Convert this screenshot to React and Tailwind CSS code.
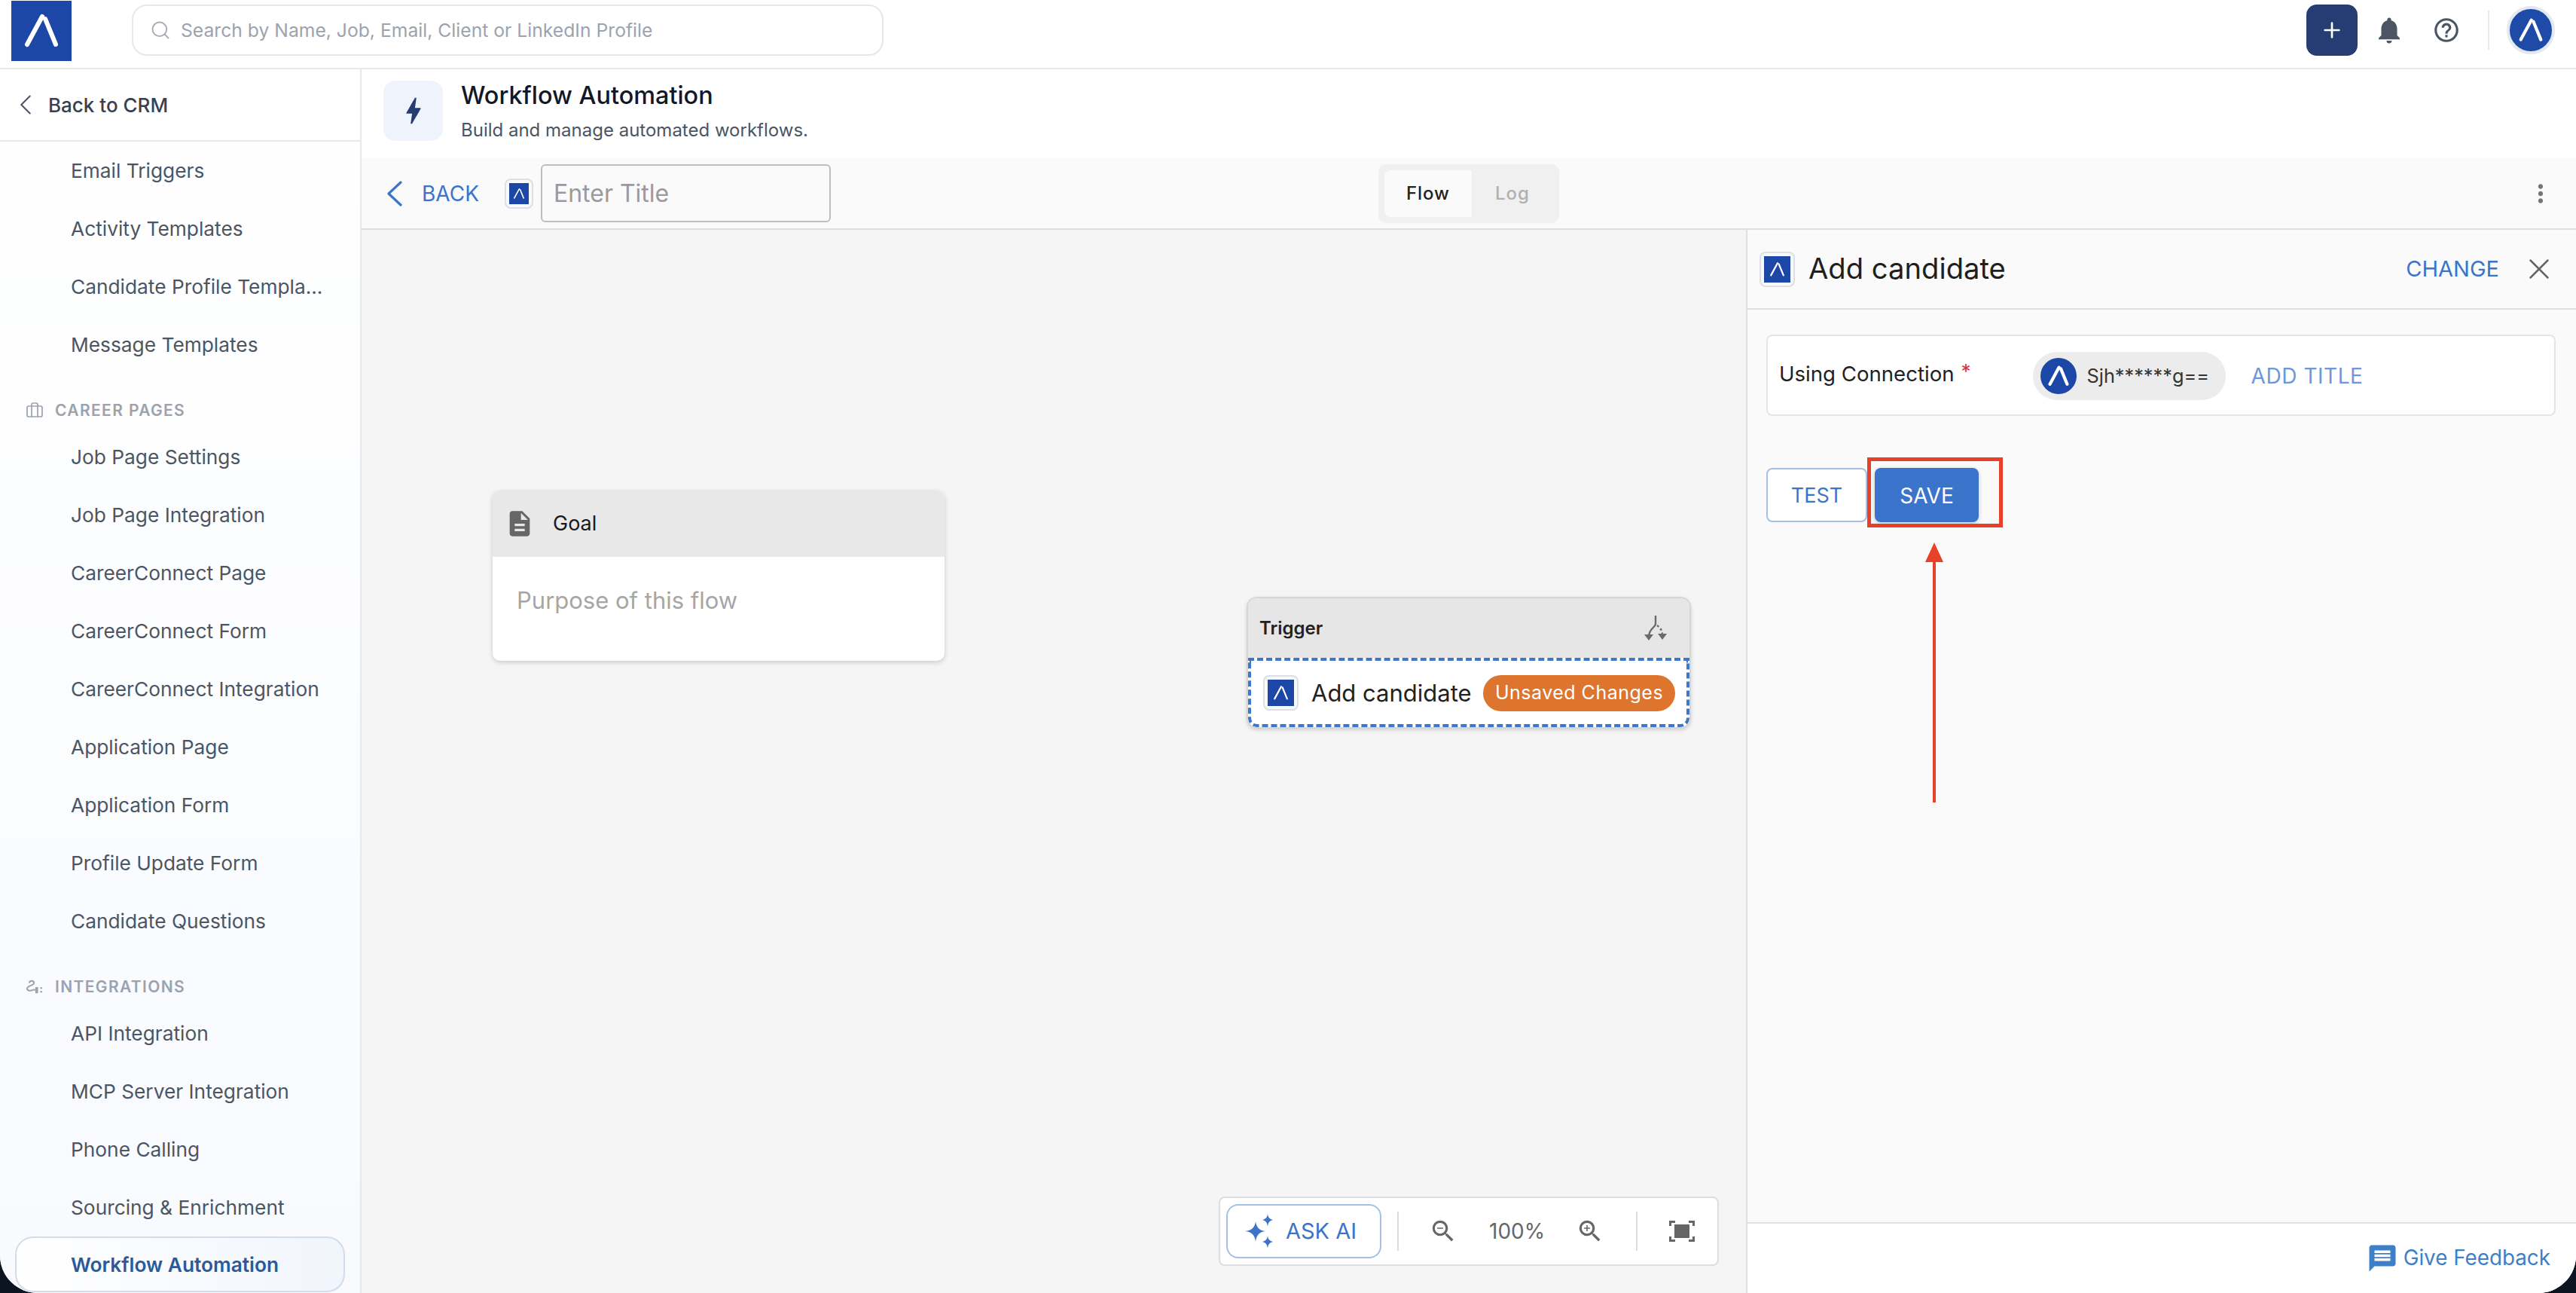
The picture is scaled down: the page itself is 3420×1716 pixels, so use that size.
import React from "react";
import { ChevronLeft, Search, Briefcase, Plus, X } from "lucide-react";
import { MdNotifications, MdHelpOutline, MdMoreVert, MdDescription, MdZoomIn, MdZoomOut, MdMessage, MdBolt } from "react-icons/md";

const font = { fontFamily: "Inter, 'Noto Sans', sans-serif" };

function Mark({ className = "", sw = 6 }) {
  return (
    <svg viewBox="0 0 80 80" className={className} fill="none" stroke="#fff" strokeWidth={sw} strokeLinecap="round">
      <path d="M21 58 L41 21" />
      <path d="M45 24 L59 58" />
    </svg>
  );
}

function Tile({ outer = "w-[47px] h-[47px]", sw = 5 }) {
  return (
    <div className={`${outer} shrink-0 rounded-[8px] border-2 border-[#dcdfe4] bg-[#f7f9fc] p-[4px]`}>
      <div className="w-full h-full bg-[#1c47a6]">
        <Mark className="w-full h-full" sw={sw} />
      </div>
    </div>
  );
}

function Item({ children }) {
  return (
    <div className="h-[77px] shrink-0 pl-[94px] flex items-center text-[26.3px] text-[#4b5563] whitespace-nowrap">
      {children}
    </div>
  );
}

function Section({ icon, children }) {
  return (
    <div className="h-[72px] shrink-0 pt-[37px] pl-[34px] flex items-start gap-[15px] text-[21px] leading-[24px] font-semibold tracking-[0.065em] text-[#9ca3af]">
      <span className="w-[24px] h-[24px] flex items-center justify-center">{icon}</span>
      <span>{children}</span>
    </div>
  );
}

function Sparkle() {
  return (
    <svg viewBox="0 0 38 46" className="w-[38px] h-[46px]" fill="#3b74c8">
      <path d="M14 10 C15 18 19 22 27 23 C19 24 15 28 14 37 C13 28 9 24 0 23 C9 22 13 18 14 10 Z" />
      <path d="M30 0 C30.5 5 33 7 37 8 C33 9 30.5 11 30 17 C29.5 11 27 9 23 8 C27 7 29.5 5 30 0 Z" />
      <path d="M30 29 C30.5 34 33 36 37 37 C33 38 30.5 40 30 46 C29.5 40 27 38 23 37 C27 36 29.5 34 30 29 Z" />
    </svg>
  );
}

function FitIcon() {
  return (
    <svg viewBox="0 0 34 28" className="w-[34px] h-[28px]" fill="none" stroke="#666" strokeWidth="3">
      <path d="M1.5 7 V1.5 H8 M26 1.5 H32.5 V7 M32.5 21 V26.5 H26 M8 26.5 H1.5 V21" />
      <rect x="7" y="5" width="20" height="18" fill="#666" stroke="none" />
    </svg>
  );
}

function BranchIcon() {
  return (
    <svg viewBox="0 0 30 34" className="w-[30px] h-[34px]" fill="none" stroke="#6b6b6b" strokeWidth="2.4">
      <path d="M15 0 V11 C15 15 7 17 6 27" />
      <path d="M17 13 C20 15 23 18 24 24" strokeDasharray="3 3" />
      <path d="M0 25 H12 L6 33 Z" fill="#6b6b6b" stroke="none" />
      <path d="M18 24 H30 L24 32 Z" fill="#6b6b6b" stroke="none" />
    </svg>
  );
}

function PlugIcon() {
  return (
    <svg viewBox="0 0 24 22" className="w-[22px] h-[20px]" fill="none" stroke="#9ca3af" strokeWidth="2.2">
      <path d="M4 5 C5 1 11 1 11 5 C11 9 1 9 1 13 C1 17 6 17 10 15" />
      <path d="M10 15 H13" />
      <path d="M13 11 H17 V20 H13 Z" fill="#9ca3af" stroke="none" />
      <path d="M20 12.5 H23 M20 18 H23" />
    </svg>
  );
}

export default function App() {
  return (
    <div className="w-[3420px] h-[1716px] bg-[#0b1420] overflow-hidden" style={font}>
      <div className="w-full h-full bg-white rounded-b-[50px] overflow-hidden flex flex-col">
        {/* Top bar */}
        <header className="h-[92px] shrink-0 border-b-2 border-[#e8e8e8] flex items-center bg-white">
          <div className="ml-[15px] mt-[-9px] w-[80px] h-[80px] bg-[#1c47a6] shrink-0">
            <Mark className="w-full h-full" sw={6} />
          </div>
          <div className="ml-[80px] mt-[-10px] w-[998px] h-[68px] rounded-[20px] border-2 border-[#e6e7ea] flex items-center pl-[22px] gap-[13px]">
            <Search className="w-[28px] h-[28px] text-[#a6abb3]" strokeWidth={1.6} />
            <span className="text-[24.7px] pt-[1px] text-[#9ca3af]">Search by Name, Job, Email, Client or LinkedIn Profile</span>
          </div>
          <div className="ml-auto mr-[28px] mt-[-10px] flex items-center">
            <div className="w-[68px] h-[68px] rounded-[14px] bg-[#263d73] flex items-center justify-center">
              <Plus className="w-[32px] h-[32px] text-white" strokeWidth={2} />
            </div>
            <MdNotifications className="ml-[21px] w-[42px] h-[42px] text-[#4b5563]" />
            <MdHelpOutline className="ml-[36px] w-[38px] h-[38px] text-[#4b5563]" />
            <div className="ml-[36px] w-[2px] h-[52px] bg-[#e5e7eb]" />
            <div className="ml-[23px] w-[64px] h-[64px] rounded-full border-[4px] border-[#e4e8f0] bg-[#1e4aa8] overflow-hidden">
              <Mark className="w-full h-full" sw={6} />
            </div>
          </div>
        </header>

        <div className="flex-1 flex min-h-0">
          {/* Sidebar */}
          <aside className="w-[480px] shrink-0 border-r-2 border-[#e7e8ec] bg-gradient-to-b from-white to-[#f8fafe] overflow-hidden flex flex-col">
            <div className="h-[96px] shrink-0 border-b-2 border-[#e8e8e8] flex items-center pl-[11px] gap-[7px] bg-white">
              <ChevronLeft className="w-[46px] h-[46px] text-[#4b5563]" strokeWidth={1.1} />
              <span className="text-[26px] font-medium text-[#374151]">Back to CRM</span>
            </div>
            <Item>Email Triggers</Item>
            <Item>Activity Templates</Item>
            <Item>Candidate Profile Templa...</Item>
            <Item>Message Templates</Item>
            <Section icon={<Briefcase className="w-[24px] h-[24px]" strokeWidth={1.7} />}>CAREER PAGES</Section>
            <Item>Job Page Settings</Item>
            <Item>Job Page Integration</Item>
            <Item>CareerConnect Page</Item>
            <Item>CareerConnect Form</Item>
            <Item>CareerConnect Integration</Item>
            <Item>Application Page</Item>
            <Item>Application Form</Item>
            <Item>Profile Update Form</Item>
            <Item>Candidate Questions</Item>
            <Section icon={<PlugIcon />}>INTEGRATIONS</Section>
            <Item>API Integration</Item>
            <Item>MCP Server Integration</Item>
            <Item>Phone Calling</Item>
            <Item>Sourcing &amp; Enrichment</Item>
            <div className="ml-[20px] w-[438px] h-[74px] pt-[2px] shrink-0 rounded-[24px] border-2 border-[#d3dcea] bg-gradient-to-r from-white to-[#f1f5fc] flex items-center pl-[72px] text-[26.3px] font-semibold text-[#2b5a9b]">
              Workflow Automation
            </div>
          </aside>

          {/* Main */}
          <main className="flex-1 min-w-0 flex flex-col">
            <div className="h-[118px] shrink-0 bg-white flex items-center pl-[29px] pb-[8px] gap-[24px]">
              <div className="w-[79px] h-[80px] rounded-[16px] bg-[#eff4fc] flex items-center justify-center">
                <MdBolt className="w-[46px] h-[46px] text-[#263d73]" />
              </div>
              <div className="flex flex-col gap-[12px] pt-[2px]">
                <div className="text-[32.4px] leading-[38px] font-medium text-[#111827]">Workflow Automation</div>
                <div className="text-[24px] leading-[30px] text-[#4b5563]">Build and manage automated workflows.</div>
              </div>
            </div>

            <div className="h-[95px] shrink-0 bg-[#fafafa] border-b-2 border-[#dedede] flex items-center pl-[33px] pr-[28px] relative">
              <svg viewBox="0 0 22 34" className="w-[22px] h-[34px]" fill="none" stroke="#3b74c8" strokeWidth="3.2" strokeLinecap="round" strokeLinejoin="round">
                <path d="M19 2 L3 17 L19 32" />
              </svg>
              <span className="ml-[25px] text-[28px] text-[#3b74c8]">BACK</span>
              <div className="ml-[34px]">
                <Tile outer="w-[38px] h-[40px]" sw={5} />
              </div>
              <div className="ml-[10px] w-[385px] h-[77px] rounded-[6px] border-2 border-[#bdbdbd] flex items-center pl-[15px] text-[32px] text-[#9a9a9a]">
                Enter Title
              </div>
              <div className="ml-[727px] w-[240px] h-[78px] rounded-[10px] bg-[#f0f0f0] p-[8px] flex text-[24px]">
                <div className="w-[116px] rounded-l-[8px] bg-[#fafafa] flex items-center justify-center font-medium tracking-[0.04em] text-[#222]">Flow</div>
                <div className="flex-1 flex items-center justify-center font-medium tracking-[0.04em] text-[#b0b0b0]">Log</div>
              </div>
              <MdMoreVert className="ml-auto w-[38px] h-[38px] text-[#757575]" />
            </div>

            <div className="flex-1 min-h-0 flex">
              {/* Canvas */}
              <div className="flex-1 min-w-0 relative bg-[#f5f5f5]">
                <div className="absolute left-[174px] top-[346px] w-[600px] h-[226px] rounded-[10px] bg-white shadow-[0_2px_6px_rgba(0,0,0,0.18)] overflow-hidden">
                  <div className="h-[88px] bg-[#e8e8e8] flex items-center pl-[23px] gap-[31px]">
                    <MdDescription className="w-[40px] h-[40px] -mx-[7px] text-[#666]" />
                    <span className="text-[27px] text-[#1a1a1a]">Goal</span>
                  </div>
                  <div className="pl-[32px] pt-[38px] text-[31px] leading-[40px] text-[#a6a6a6]">Purpose of this flow</div>
                </div>

                <div className="absolute left-[1175px] top-[487px] w-[590px] h-[175px] rounded-[14px] border-2 border-[#d6d6d6] bg-white shadow-[0_2px_5px_rgba(0,0,0,0.15)] overflow-hidden flex flex-col">
                  <div className="h-[79px] shrink-0 bg-[#e6e6e6] flex items-center justify-between pl-[15px] pr-[30px]">
                    <span className="text-[24px] font-semibold text-[#222]">Trigger</span>
                    <BranchIcon />
                  </div>
                  <div className="flex-1 rounded-b-[12px] border-[4px] border-dashed border-[#3f76c6] flex items-center pl-[16px] pr-[15px]">
                    <Tile />
                    <span className="ml-[17px] mt-[2px] text-[31px] text-[#222]">Add candidate</span>
                    <span className="ml-auto mt-[2px] w-[255px] h-[48px] rounded-full bg-[#dd752e] flex items-center justify-center text-[25px] tracking-[0.02em] text-white whitespace-nowrap">Unsaved Changes</span>
                  </div>
                </div>

                <div className="absolute left-[1138px] top-[1283px] w-[664px] h-[92px] rounded-[8px] border-2 border-[#dcdee2] bg-white flex items-center pl-[8px]">
                  <div className="w-[206px] h-[72px] rounded-[16px] border-2 border-[#a5c0e6] flex items-center pl-[23px] gap-[16px]">
                    <Sparkle />
                    <span className="text-[29px] text-[#3b74c8]">ASK AI</span>
                  </div>
                  <div className="ml-[21px] w-[2px] h-[52px] bg-[#dcdcdc]" />
                  <MdZoomOut className="ml-[40px] w-[38px] h-[38px] text-[#666]" />
                  <span className="ml-[42px] text-[28px] text-[#666]">100%</span>
                  <MdZoomIn className="ml-[41px] w-[38px] h-[38px] text-[#666]" />
                  <div className="ml-[42px] w-[2px] h-[52px] bg-[#dcdcdc]" />
                  <div className="ml-[42px]"><FitIcon /></div>
                </div>
              </div>

              {/* Right panel */}
              <div className="w-[1102px] shrink-0 border-l-2 border-[#dedede] bg-[#fafafa] flex flex-col">
                <div className="h-[106px] shrink-0 border-b-2 border-[#dedede] flex items-center pl-[16px] pr-[26px]">
                  <Tile />
                  <span className="ml-[18px] text-[38.2px] text-[#1f1f1f]">Add candidate</span>
                  <span className="ml-auto text-[29px] text-[#3b74c8]">CHANGE</span>
                  <X className="ml-[30px] w-[46px] h-[46px] text-[#666]" strokeWidth={1.3} />
                </div>
                <div className="flex-1 min-h-0 pl-[25px] pr-[27px] pt-[33px]">
                  <div className="h-[108px] rounded-[8px] border-2 border-[#e5e5e5] bg-white flex items-center pl-[15px]">
                    <span className="text-[27.6px] text-[#222] -mt-[2px]">Using Connection</span>
                    <span className="ml-[9px] text-[26px] text-[#d33] -mt-[12px]">*</span>
                    <div className="ml-[82px] mt-[2px] w-[256px] h-[64px] rounded-full bg-[#ececec] flex items-center pl-[10px]">
                      <div className="w-[48px] h-[48px] rounded-full bg-[#1c47a6] overflow-hidden"><Mark className="w-full h-full" sw={7} /></div>
                      <span className="ml-[14px] text-[25.3px] text-[#333]">Sjh******g==</span>
                    </div>
                    <span className="ml-[34px] mt-[2px] text-[28px] tracking-[0.02em] text-[#6c97d8]">ADD TITLE</span>
                  </div>
                  <div className="relative mt-[69px] flex gap-[10px]">
                    <div className="w-[134px] h-[72px] pt-[2px] rounded-[8px] border-2 border-[#a5bfe6] bg-white flex items-center justify-center text-[27px] text-[#3b74c8]">TEST</div>
                    <div className="w-[138px] h-[72px] pt-[2px] rounded-[8px] bg-[#3b74cb] flex items-center justify-center text-[28px] text-white shadow-[0_2px_6px_rgba(0,0,0,0.2)]">SAVE</div>
                    <div className="absolute left-[134px] top-[-14px] w-[180px] h-[93px] border-[5px] border-[#e8412a]" />
                    <svg viewBox="0 0 26 345" className="absolute left-[210px] top-[99px] w-[26px] h-[345px]">
                      <path d="M13 0 L25 26 H1 Z" fill="#e8412a" />
                      <path d="M13 20 V345" stroke="#e8412a" strokeWidth="4" />
                    </svg>
                  </div>
                </div>
                <div className="h-[94px] shrink-0 border-t-2 border-[#e2e2e2] bg-white flex items-center justify-end pr-[34px] gap-[7px]">
                  <MdMessage className="w-[42px] h-[42px] text-[#3d80c8]" />
                  <span className="text-[27.8px] text-[#3d80c8]">Give Feedback</span>
                </div>
              </div>
            </div>
          </main>
        </div>
      </div>
    </div>
  );
}
